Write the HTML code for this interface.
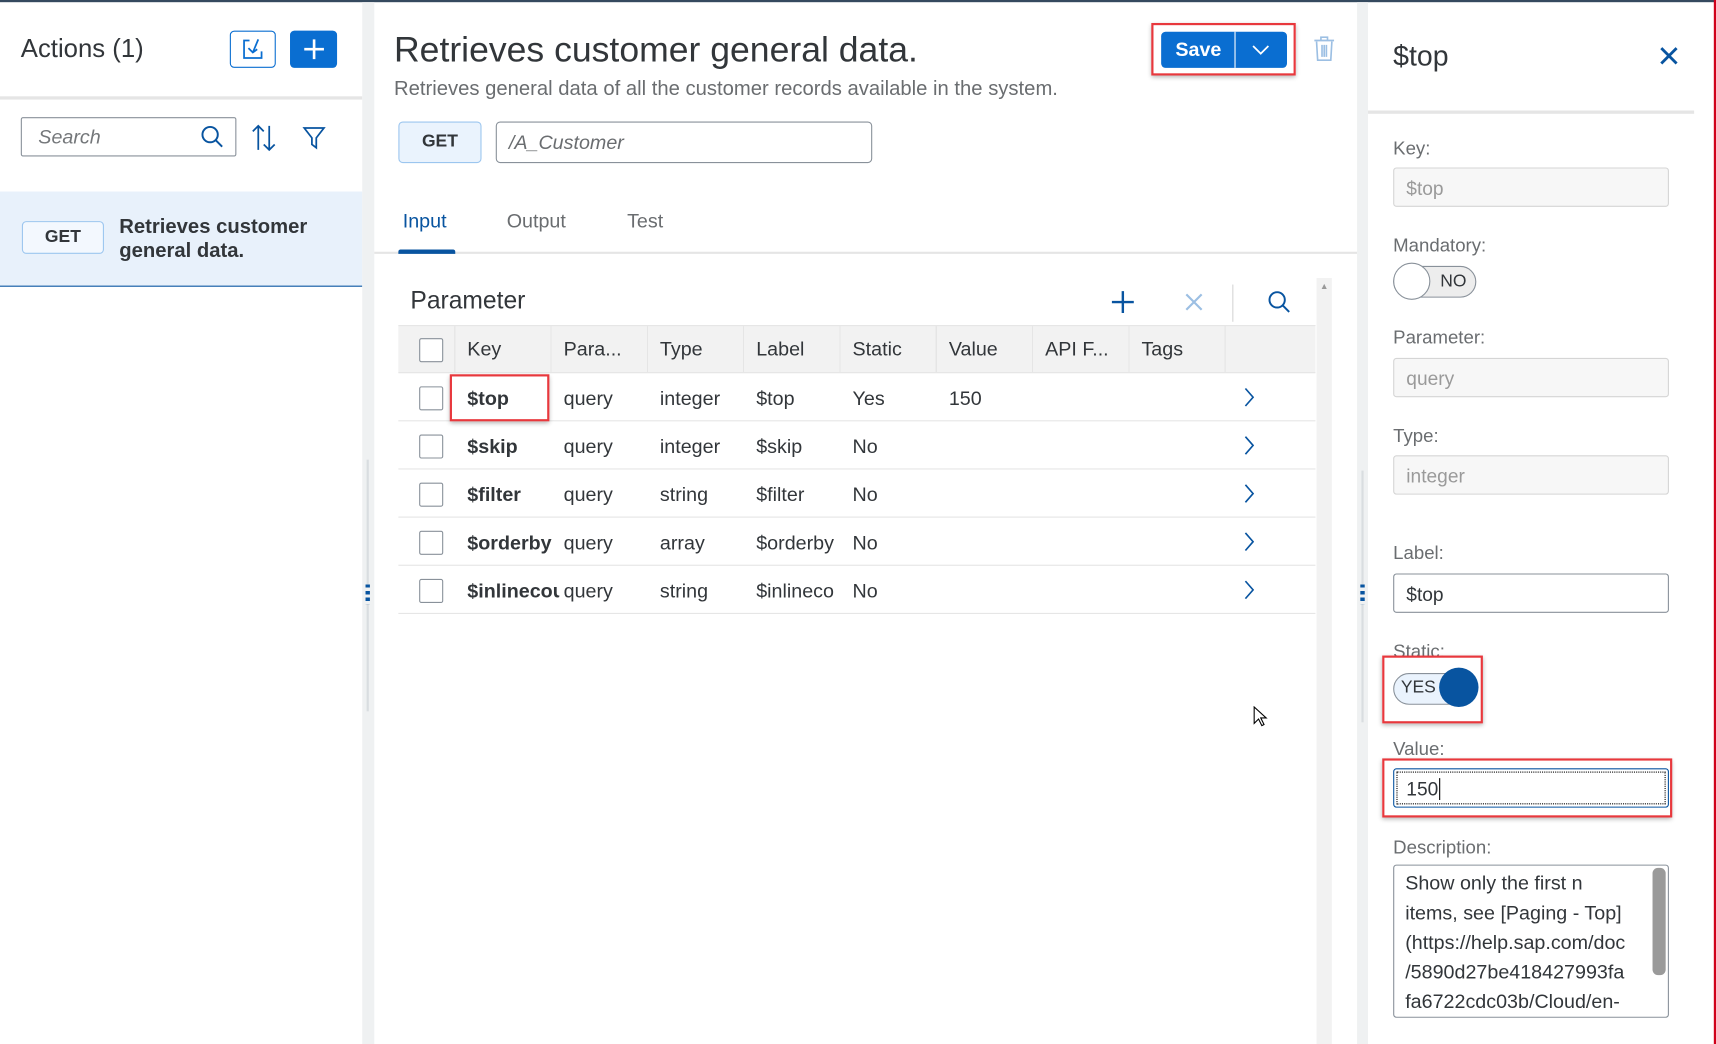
<!DOCTYPE html>
<html><head><meta charset="utf-8"><style>
html,body{margin:0;padding:0;width:1716px;height:1044px;overflow:hidden;background:#fff}
#s{position:absolute;left:0;top:0;width:1568px;height:954px;transform:scale(1.09439);transform-origin:0 0;font-family:"Liberation Sans",sans-serif;color:#32363a}
.a{position:absolute}
.t{position:absolute;white-space:nowrap;line-height:1}
.lbl{position:absolute;left:1273px;font-size:17px;color:#6a6d70;white-space:nowrap}
.inp{position:absolute;left:1273px;width:252px;height:36px;border:1px solid #d5d5d5;border-radius:3px;background:#f7f7f7;box-sizing:border-box;font-size:17.5px;color:#9a9a9a;padding:8px 11px}
.cb{position:absolute;left:383px;width:20px;height:20px;border:1px solid #89919a;border-radius:2px;background:#fff}
.row{position:absolute;left:364px;width:838px;height:44px;border-bottom:1px solid #e5e5e5;box-sizing:border-box}
.c{position:absolute;font-size:18px;top:13px;white-space:nowrap;overflow:hidden}
.red{position:absolute;border:2px solid #e8383d;box-shadow:0 2px 4px rgba(0,0,0,.3)}
</style></head><body><div id="s">
<div class="a" style="left:0;top:0;width:1568px;height:2px;background:#354a5f"></div>
<!-- left -->
<div class="t" style="left:19px;top:33px;font-size:23.5px">Actions (1)</div>
<div class="a" style="left:210px;top:28px;width:42px;height:34px;border:1px solid #0a6ed1;border-radius:4px;box-sizing:border-box"></div>
<svg class="a" style="left:220px;top:33px" width="24" height="24" viewBox="0 0 24 24" fill="none" stroke="#0a6ed1" stroke-width="1.6"><path d="M8 4H3v16h16v-6"/><path d="M16 3l-5 12"/><path d="M7 11l4 4 4-3"/></svg>
<div class="a" style="left:265px;top:28px;width:43px;height:34px;background:#0a6ed1;border-radius:4px"></div>
<svg class="a" style="left:275px;top:33px" width="24" height="24" stroke="#fff" stroke-width="2.4"><path d="M12 3v18M3 12h18"/></svg>
<div class="a" style="left:0;top:88px;width:331px;height:3px;background:#e5e5e5"></div>
<div class="a" style="left:19px;top:107px;width:197px;height:36px;border:1px solid #89919a;border-radius:2px;box-sizing:border-box"></div>
<div class="t" style="left:35px;top:116px;font-size:18px;font-style:italic;color:#74777a">Search</div>
<svg class="a" style="left:182px;top:113px" width="24" height="24" fill="none" stroke="#0854a0" stroke-width="1.8"><circle cx="10" cy="10" r="7"/><path d="M15 15l6 6"/></svg>
<svg class="a" style="left:229px;top:113px" width="24" height="26" fill="none" stroke="#0854a0" stroke-width="1.6"><path d="M7 24V2M2 7l5-5 5 5M17 2v22M12 19l5 5 5-5"/></svg>
<svg class="a" style="left:276px;top:114px" width="22" height="24" fill="none" stroke="#0854a0" stroke-width="1.6"><path d="M2 3h18l-7 9v9l-4-3v-6z"/></svg>
<div class="a" style="left:0;top:175px;width:331px;height:86px;background:#e8f1fb;border-bottom:1px solid #0854a0"></div>
<div class="a" style="left:20px;top:202px;width:75px;height:30px;border:1px solid #9cc6ef;border-radius:4px;background:#f3f8fe;box-sizing:border-box;font-size:16px;font-weight:bold;text-align:center;line-height:28px">GET</div>
<div class="t" style="left:109px;top:196px;font-size:18.5px;font-weight:bold;line-height:22px">Retrieves customer<br>general data.</div>
<!-- divider -->
<div class="a" style="left:331px;top:2px;width:11px;height:952px;background:#eff1f2"></div>
<div class="a" style="left:335px;top:420px;width:2px;height:230px;background:#d9dde0"></div>
<div class="a" style="left:334px;top:534px;width:4px;height:18px;background:repeating-linear-gradient(#0854a0 0 3px,#eff1f2 3px 6px)"></div>
<!-- middle -->
<div class="t" style="left:360px;top:29px;font-size:32.5px">Retrieves customer general data.</div>
<div class="t" style="left:360px;top:72px;font-size:18.5px;color:#6a6d70">Retrieves general data of all the customer records available in the system.</div>
<div class="a" style="left:1061px;top:29px;width:115px;height:33px;background:#0a6ed1;border-radius:4px"></div>
<div class="a" style="left:1128px;top:29px;width:1px;height:33px;background:#fff"></div>
<div class="t" style="left:1074px;top:36px;font-size:18px;font-weight:bold;color:#fff">Save</div>
<svg class="a" style="left:1143px;top:38px" width="18" height="14" fill="none" stroke="#fff" stroke-width="1.6"><path d="M2 4l7 7 7-7"/></svg>
<div class="red" style="left:1052px;top:21px;width:128px;height:44px"></div>
<svg class="a" style="left:1200px;top:33px" width="20" height="24" fill="none" stroke="#9cbfe3" stroke-width="1.5"><path d="M1 4h18M7 4V1h6v3M3 5l1 17h12l1-17M8 8v11M10 8v11M12 8v11"/></svg>
<div class="a" style="left:364px;top:111px;width:76px;height:38px;border:1px solid #9cc6ef;border-radius:4px;background:#eaf3fd;box-sizing:border-box;font-size:16px;font-weight:bold;text-align:center;line-height:36px">GET</div>
<div class="a" style="left:453px;top:111px;width:344px;height:38px;border:1px solid #89919a;border-radius:4px;box-sizing:border-box"></div>
<div class="t" style="left:465px;top:121px;font-size:18px;font-style:italic;color:#6a6d70">/A_Customer</div>
<div class="t" style="left:368px;top:193px;font-size:18px;color:#0854a0">Input</div>
<div class="t" style="left:463px;top:193px;font-size:18px;color:#6a6d70">Output</div>
<div class="t" style="left:573px;top:193px;font-size:18px;color:#6a6d70">Test</div>
<div class="a" style="left:342px;top:230px;width:898px;height:2px;background:#e5e5e5"></div>
<div class="a" style="left:364px;top:228px;width:52px;height:4px;background:#0854a0;border-radius:2px 2px 0 0"></div>
<div class="t" style="left:375px;top:264px;font-size:22.5px">Parameter</div>
<svg class="a" style="left:1014px;top:264px" width="24" height="24" stroke="#0854a0" stroke-width="2.2"><path d="M12 2v20M2 12h20"/></svg>
<svg class="a" style="left:1082px;top:267px" width="18" height="18" stroke="#9cbfe3" stroke-width="2"><path d="M2 2l14 14M16 2L2 16"/></svg>
<div class="a" style="left:1126px;top:260px;width:1px;height:34px;background:#d5d5d5"></div>
<svg class="a" style="left:1157px;top:264px" width="24" height="24" fill="none" stroke="#0854a0" stroke-width="1.8"><circle cx="10" cy="10" r="7"/><path d="M15 15l6 6"/></svg>
<div class="a" style="left:1203px;top:254px;width:14px;height:700px;background:#f2f2f2"></div>
<div class="t" style="left:1206px;top:258px;font-size:8px;color:#999">▲</div>
<div class="a" style="left:364px;top:297px;width:838px;height:44px;background:#f2f2f2;border-top:1px solid #e5e5e5;border-bottom:1px solid #e5e5e5;box-sizing:border-box"></div>
<div class="a" style="left:415px;top:298px;width:705px;height:42px;background:repeating-linear-gradient(90deg,#e5e5e5 0 1px,transparent 1px 88px)"></div>
<div class="a" style="left:1119px;top:298px;width:1px;height:42px;background:#e5e5e5"></div>
<div class="cb" style="top:309px"></div>
<div class="t" style="top:310px;left:427px;font-size:18px">Key</div>
<div class="t" style="top:310px;left:515px;font-size:18px">Para...</div>
<div class="t" style="top:310px;left:603px;font-size:18px">Type</div>
<div class="t" style="top:310px;left:691px;font-size:18px">Label</div>
<div class="t" style="top:310px;left:779px;font-size:18px">Static</div>
<div class="t" style="top:310px;left:867px;font-size:18px">Value</div>
<div class="t" style="top:310px;left:955px;font-size:18px">API F...</div>
<div class="t" style="top:310px;left:1043px;font-size:18px">Tags</div>

<div class="row" style="top:341px"><div class="cb" style="left:19px;top:12px"></div><div class="c" style="left:63px;width:84px;font-weight:bold">$top</div><div class="c" style="left:151px">query</div><div class="c" style="left:239px">integer</div><div class="c" style="left:327px">$top</div><div class="c" style="left:415px">Yes</div><div class="c" style="left:503px">150</div><svg class="a" style="left:772px;top:13px" width="10" height="18" fill="none" stroke="#0854a0" stroke-width="1.5"><path d="M2 1l7 8-7 8"/></svg></div>
<div class="row" style="top:385px"><div class="cb" style="left:19px;top:12px"></div><div class="c" style="left:63px;width:84px;font-weight:bold">$skip</div><div class="c" style="left:151px">query</div><div class="c" style="left:239px">integer</div><div class="c" style="left:327px">$skip</div><div class="c" style="left:415px">No</div><svg class="a" style="left:772px;top:13px" width="10" height="18" fill="none" stroke="#0854a0" stroke-width="1.5"><path d="M2 1l7 8-7 8"/></svg></div>
<div class="row" style="top:429px"><div class="cb" style="left:19px;top:12px"></div><div class="c" style="left:63px;width:84px;font-weight:bold">$filter</div><div class="c" style="left:151px">query</div><div class="c" style="left:239px">string</div><div class="c" style="left:327px">$filter</div><div class="c" style="left:415px">No</div><svg class="a" style="left:772px;top:13px" width="10" height="18" fill="none" stroke="#0854a0" stroke-width="1.5"><path d="M2 1l7 8-7 8"/></svg></div>
<div class="row" style="top:473px"><div class="cb" style="left:19px;top:12px"></div><div class="c" style="left:63px;width:84px;font-weight:bold">$orderby</div><div class="c" style="left:151px">query</div><div class="c" style="left:239px">array</div><div class="c" style="left:327px;width:86px">$orderby</div><div class="c" style="left:415px">No</div><svg class="a" style="left:772px;top:13px" width="10" height="18" fill="none" stroke="#0854a0" stroke-width="1.5"><path d="M2 1l7 8-7 8"/></svg></div>
<div class="row" style="top:517px"><div class="cb" style="left:19px;top:12px"></div><div class="c" style="left:63px;width:84px;font-weight:bold">$inlinecount</div><div class="c" style="left:151px">query</div><div class="c" style="left:239px">string</div><div class="c" style="left:327px;width:86px">$inlineco</div><div class="c" style="left:415px">No</div><svg class="a" style="left:772px;top:13px" width="10" height="18" fill="none" stroke="#0854a0" stroke-width="1.5"><path d="M2 1l7 8-7 8"/></svg></div>
<div class="red" style="left:411px;top:342px;width:87px;height:39px"></div>
<svg class="a" style="left:1145px;top:645px" width="14" height="20"><path d="M1 1v15l4-4 3 6 2-1-3-6h5z" fill="#fff" stroke="#000" stroke-width="1"/></svg>
<!-- right divider -->
<div class="a" style="left:1240px;top:2px;width:10px;height:952px;background:#eff1f2"></div>
<div class="a" style="left:1244px;top:430px;width:2px;height:230px;background:#d9dde0"></div>
<div class="a" style="left:1243px;top:534px;width:4px;height:18px;background:repeating-linear-gradient(#0854a0 0 3px,#eff1f2 3px 6px)"></div>
<div class="a" style="left:1566px;top:0;width:2px;height:954px;background:#d0021b"></div>
<!-- right -->
<div class="t" style="left:1273px;top:38px;font-size:26px">$top</div>
<svg class="a" style="left:1516px;top:42px" width="18" height="18" stroke="#0854a0" stroke-width="2.6"><path d="M2 2l14 14M16 2L2 16"/></svg>
<div class="a" style="left:1250px;top:101px;width:298px;height:3px;background:#e5e5e5"></div>
<div class="lbl" style="top:126px">Key:</div>
<div class="inp" style="top:153px">$top</div>
<div class="lbl" style="top:215px">Mandatory:</div>
<div class="a" style="left:1273px;top:243px;width:76px;height:29px;border:1px solid #89919a;border-radius:15px;background:#ededed;box-sizing:border-box"></div>
<div class="a" style="left:1273px;top:240px;width:34px;height:34px;border:1px solid #89919a;border-radius:50%;background:#fff;box-sizing:border-box"></div>
<div class="t" style="left:1316px;top:250px;font-size:16px">NO</div>
<div class="lbl" style="top:299px">Parameter:</div>
<div class="inp" style="top:327px">query</div>
<div class="lbl" style="top:389px">Type:</div>
<div class="inp" style="top:416px">integer</div>
<div class="lbl" style="top:496px">Label:</div>
<div class="inp" style="top:524px;background:#fff;border-color:#89919a;color:#32363a">$top</div>
<div class="lbl" style="top:586px">Static:</div>
<div class="a" style="left:1273px;top:615px;width:76px;height:29px;border:1px solid #89919a;border-radius:15px;background:#eaf3fd;box-sizing:border-box"></div>
<div class="a" style="left:1315px;top:610px;width:36px;height:36px;border-radius:50%;background:#0854a0"></div>
<div class="t" style="left:1280px;top:621px;font-size:16px">YES</div>
<div class="red" style="left:1263px;top:599px;width:88px;height:58px"></div>
<div class="lbl" style="top:675px">Value:</div>
<div class="inp" style="top:702px;background:#fff;border-color:#0854a0;color:#32363a;outline:1px dotted #000;outline-offset:-4px">150<span style="border-left:1px solid #000;margin-left:1px"></span></div>
<div class="red" style="left:1263px;top:693px;width:261px;height:50px"></div>
<div class="lbl" style="top:765px">Description:</div>
<div class="a" style="left:1273px;top:790px;width:252px;height:140px;border:1px solid #89919a;border-radius:3px;box-sizing:border-box;overflow:hidden">
<div style="position:absolute;left:10px;top:3px;width:224px;font-size:18px;line-height:27px;color:#32363a;white-space:nowrap;overflow:hidden">Show only the first n<br>items, see [Paging - Top]<br>(https://help.sap.com/doc<br>/5890d27be418427993fa<br>fa6722cdc03b/Cloud/en-</div>
<div style="position:absolute;left:236px;top:2px;width:12px;height:98px;background:#9a9a9a;border-radius:5px"></div>
</div>
</div></body></html>
